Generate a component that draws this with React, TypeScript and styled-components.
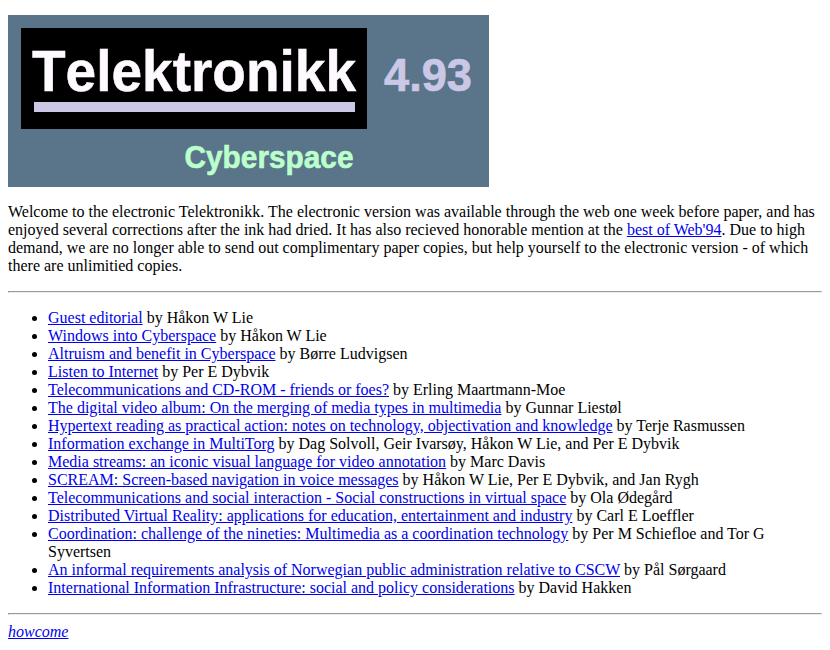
import React from "react";
import styled, { createGlobalStyle } from "styled-components";

const GlobalStyle = createGlobalStyle`
  body {
    margin: 15px 8px 8px;
    background: #fff;
    color: #000;
    font: 16px/18px "Liberation Serif", "Times New Roman", serif;
  }
`;

const Banner = styled.header`
  box-sizing: border-box;
  width: 481px;
  height: 172px;
  padding: 13px 0 0 13px;
  background: #5a748a;
  font-family: "Liberation Sans", Arial, sans-serif;
  font-weight: bold;
`;

const BannerTop = styled.div`
  display: flex;
`;

const TitlePlate = styled.div`
  box-sizing: border-box;
  width: 346px;
  height: 101px;
  padding: 15px 12px 0 13px;
  background: #000;
`;

const WordArt = styled.svg`
  display: block;
  overflow: visible;
  font-kerning: none;
`;

const Rule = styled.div`
  height: 10px;
  margin-top: 9px;
  background: #cac8e6;
`;

const Issue = styled.div`
  padding: 25px 0 0 17px;
`;

const Theme = styled.div`
  padding: 14px 0 0 164px;
`;

const Intro = styled.p`
  margin: 16px 0 0;
`;

const Divider = styled.hr`
  margin: 16px 0 8px;
`;

const Articles = styled.ul`
  margin: 16px 0;
  padding-left: 40px;
`;

const Link = styled.a`
  color: #0000ee;
  text-decoration: underline;
`;

const Address = styled.address`
  font-style: italic;
`;

const articles: [string, string][] = [
  ["Guest editorial", "Håkon W Lie"],
  ["Windows into Cyberspace", "Håkon W Lie"],
  ["Altruism and benefit in Cyberspace", "Børre Ludvigsen"],
  ["Listen to Internet", "Per E Dybvik"],
  ["Telecommunications and CD-ROM - friends or foes?", "Erling Maartmann-Moe"],
  ["The digital video album: On the merging of media types in multimedia", "Gunnar Liestøl"],
  ["Hypertext reading as practical action: notes on technology, objectivation and knowledge", "Terje Rasmussen"],
  ["Information exchange in MultiTorg", "Dag Solvoll, Geir Ivarsøy, Håkon W Lie, and Per E Dybvik"],
  ["Media streams: an iconic visual language for video annotation", "Marc Davis"],
  ["SCREAM: Screen-based navigation in voice messages", "Håkon W Lie, Per E Dybvik, and Jan Rygh"],
  ["Telecommunications and social interaction - Social constructions in virtual space", "Ola Ødegård"],
  ["Distributed Virtual Reality: applications for education, entertainment and industry", "Carl E Loeffler"],
  ["Coordination: challenge of the nineties: Multimedia as a coordination technology", "Per M Schiefloe and Tor G Syvertsen"],
  ["An informal requirements analysis of Norwegian public administration relative to CSCW", "Pål Sørgaard"],
  ["International Information Infrastructure: social and policy considerations", "David Hakken"],
];

export default function App() {
  return (
    <>
      <GlobalStyle />
      <Banner>
        <BannerTop>
          <TitlePlate>
            <WordArt width="321" height="50">
              <text x="-2" y="48" fontSize="58" textLength="324" lengthAdjust="spacingAndGlyphs" fill="#fffaff" stroke="#fffaff" strokeWidth="0.5">Telektronikk</text>
            </WordArt>
            <Rule />
          </TitlePlate>
          <Issue>
            <WordArt width="88" height="40">
              <text x="0" y="38" fontSize="47" textLength="88" lengthAdjust="spacingAndGlyphs" fill="#cac8e6" stroke="#cac8e6" strokeWidth="0.7">4.93</text>
            </WordArt>
          </Issue>
        </BannerTop>
        <Theme>
          <WordArt width="168" height="32">
            <text x="-0.5" y="24.5" fontSize="31" textLength="169" lengthAdjust="spacingAndGlyphs" fill="#bbffcc" stroke="#bbffcc" strokeWidth="0.6">Cyberspace</text>
          </WordArt>
        </Theme>
      </Banner>
      <Intro>
        Welcome to the electronic Telektronikk. The electronic version was available through the web one week before
        paper, and has enjoyed several corrections after the ink had dried. It has also recieved honorable mention at
        the <Link href="#">best of Web'94</Link>. Due to high demand, we are no longer able to send out complimentary
        paper copies, but help yourself to the electronic version - of which there are unlimitied copies.
      </Intro>
      <Divider />
      <Articles>
        {articles.map(([title, author]) => (
          <li key={title}>
            <Link href="#">{title}</Link> by {author}
          </li>
        ))}
      </Articles>
      <Divider />
      <Address>
        <Link href="#">howcome</Link>
      </Address>
    </>
  );
}
